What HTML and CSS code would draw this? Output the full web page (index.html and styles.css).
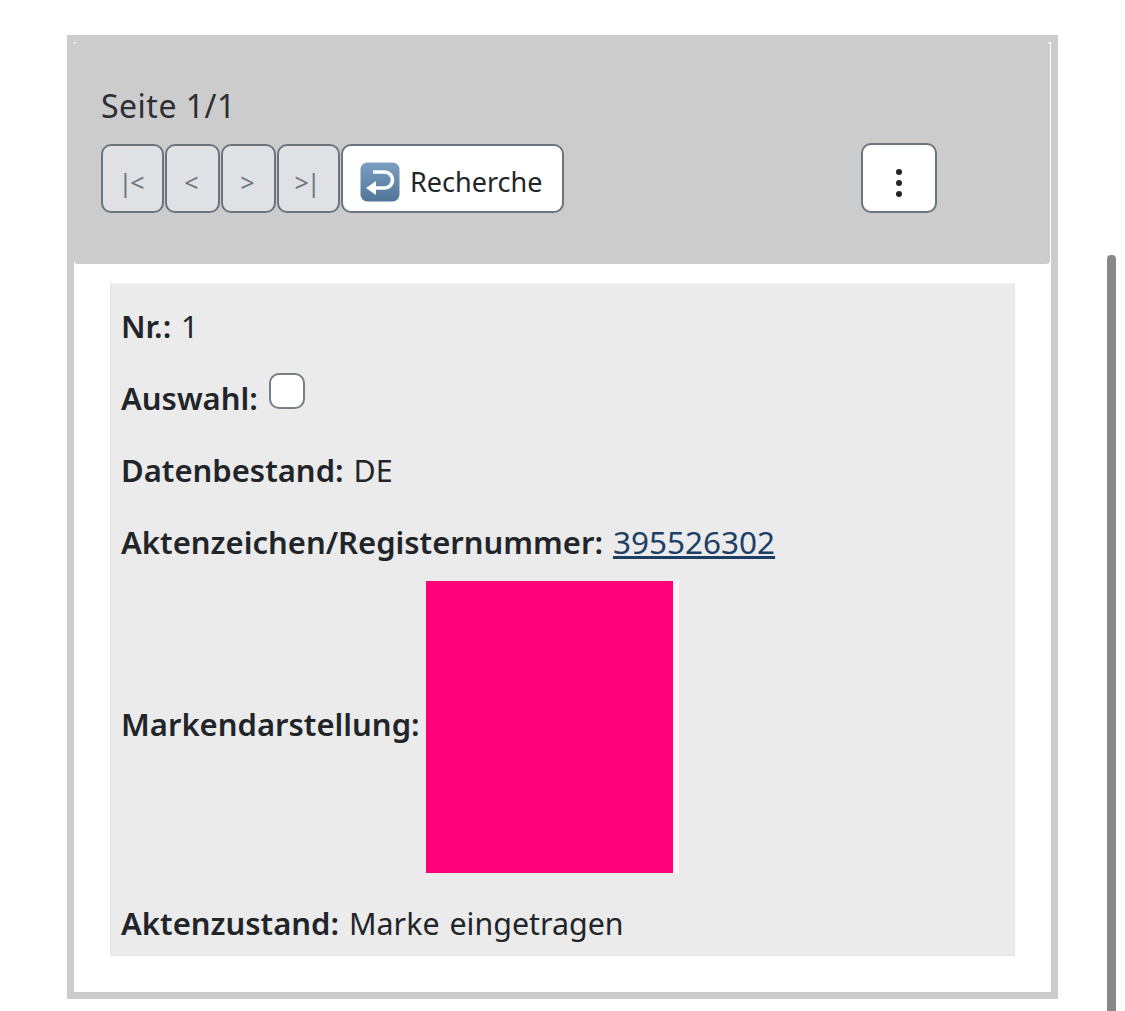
FILE: index.html
```html
<!DOCTYPE html>
<html lang="de">
<head>
    <meta charset="UTF-8">
    <title>Trefferliste</title>
    <link rel="stylesheet" href="styles.css">
</head>
<body>

<div class="result-panel">
    <div class="result-header">
        <div class="page-info">Seite 1/1</div>
        <div class="toolbar">
            <button class="btn btn-nav btn-wide" disabled>|&lt;</button>
            <button class="btn btn-nav" disabled>&lt;</button>
            <button class="btn btn-nav" disabled>&gt;</button>
            <button class="btn btn-nav btn-wide" disabled>&gt;|</button>
            <button class="btn btn-back">
                <svg class="back-icon" viewBox="0 0 40 40" aria-hidden="true">
                    <defs>
                        <linearGradient id="backFill" x1="0" y1="0" x2="0" y2="1">
                            <stop offset="0" stop-color="#7b9fc2"/>
                            <stop offset="1" stop-color="#4f7599"/>
                        </linearGradient>
                    </defs>
                    <rect x="0.5" y="0.5" width="39" height="39" rx="7" fill="url(#backFill)"/>
                    <path d="M13 10h11.5a8 8 0 0 1 0 16H14" fill="none" stroke="#fff" stroke-width="3.6"/>
                    <path d="M16 19v14L6 26z" fill="#fff"/>
                </svg>
                Recherche
            </button>
            <button class="btn btn-more" aria-label="Menü">
                <span class="dot"></span>
                <span class="dot"></span>
                <span class="dot"></span>
            </button>
        </div>
    </div>

    <div class="result-card">
        <p class="field"><b>Nr.:</b> 1</p>
        <p class="field"><b>Auswahl:</b> <input type="checkbox" class="select-box"></p>
        <p class="field"><b>Datenbestand:</b> DE</p>
        <p class="field field-tight"><b>Aktenzeichen/Registernummer:</b> <a href="#">395526302</a></p>
        <div class="field field-mark">
            <b>Markendarstellung:</b>
            <div class="mark-image" role="img" aria-label="Marke"></div>
        </div>
        <p class="field field-last"><b>Aktenzustand:</b> Marke eingetragen</p>
    </div>
</div>

<div class="scroll-thumb"></div>

</body>
</html>
```

FILE: styles.css
```css
html, body {
    height: 100%;
    overflow: hidden;
}

body {
    margin: 0;
    padding: 35px 0 0 67px;
    box-sizing: border-box;
    background: #fff;
    color: #212529;
    font-family: "Noto Sans", Arial, sans-serif;
    font-size: 30.4px;
}

.result-panel {
    width: 991px;
    height: 964px;
    box-sizing: border-box;
    border: 7px solid #ccc;
    background: #fff;
}

.result-header {
    height: 222px;
    box-sizing: border-box;
    margin-right: 1px;
    padding: 43px 27px 0;
    background: #ccc;
    border-radius: 4px;
}

.page-info {
    height: 58px;
    line-height: 42px;
    font-size: 32px;
    letter-spacing: 0.5px;
    color: #2b2f33;
}

.toolbar {
    display: flex;
    align-items: flex-end;
}

.btn {
    height: 69px;
    box-sizing: border-box;
    padding: 0;
    border: 2px solid #6c757d;
    border-radius: 10px;
    font-family: inherit;
    font-size: 27px;
    background: #fff;
    color: #212529;
}

.btn-nav {
    width: 55px;
    margin-right: 1px;
    padding: 6px 4px 0 0;
    background: #dfe1e4;
    color: #6c757d;
    font-size: 25px;
    letter-spacing: -2px;
}

.btn-wide {
    width: 63px;
}

.btn-back {
    display: flex;
    align-items: center;
    width: 223px;
    padding: 6px 0 0 17px;
    gap: 10px;
}

.back-icon {
    width: 40px;
    height: 40px;
}

.btn-more {
    display: flex;
    flex-direction: column;
    align-items: center;
    justify-content: center;
    gap: 5px;
    width: 76px;
    height: 70px;
    margin-left: 297px;
    padding-top: 10px;
}

.dot {
    width: 6px;
    height: 6px;
    border-radius: 50%;
    background: #212529;
}

.result-card {
    width: 905px;
    height: 673px;
    box-sizing: border-box;
    margin: 19px 0 0 36px;
    padding: 20px 10px 0;
    background: #ebebeb;
    border: 1px solid #e3e4ea;
    border-top-color: #f0f0f0;
}

.field {
    height: 44px;
    margin: 0 0 28px;
    line-height: 44px;
    white-space: nowrap;
    word-spacing: 2px;
}

.field b {
    font-size: 31px;
    font-weight: 600;
}

.field-tight {
    margin-bottom: 17px;
}

.field-mark {
    display: flex;
    align-items: center;
    gap: 6px;
    height: 292px;
}

.field-mark b {
    margin-bottom: 6px;
}

.field-last {
    margin-bottom: 0;
}

.field a {
    color: #1d3f66;
    font-size: 31.5px;
}

.select-box {
    appearance: none;
    width: 36px;
    height: 36px;
    margin: -8px 0 0 1px;
    box-sizing: border-box;
    vertical-align: 1px;
    background: #fff;
    border: 2px solid #767e88;
    border-radius: 10px;
}

.mark-image {
    width: 247px;
    height: 292px;
    background: #ff0078;
    border-right: 6px solid #fdf6fa;
}

.scroll-thumb {
    position: absolute;
    top: 255px;
    left: 1107px;
    width: 9px;
    height: 756px;
    background: #888;
    border-radius: 4px 4px 0 0;
}
```
